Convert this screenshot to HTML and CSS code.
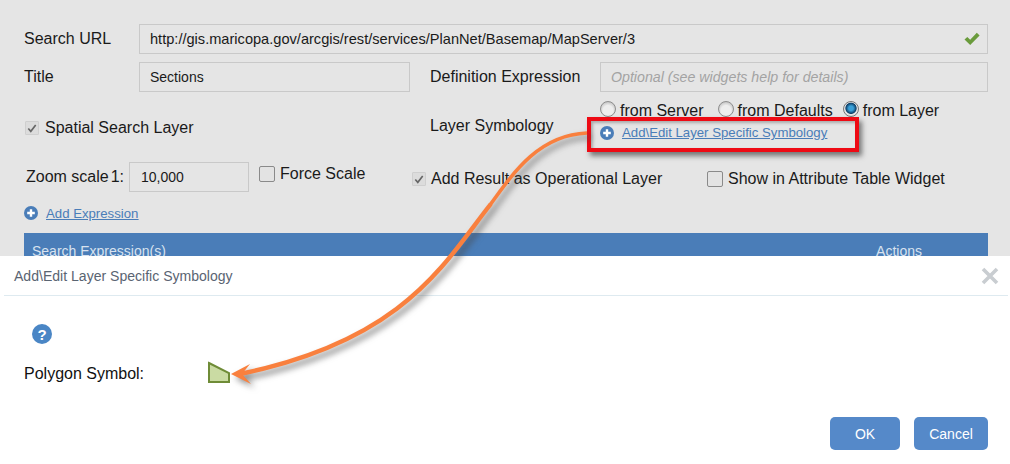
FILE: index.html
```html
<!DOCTYPE html>
<html lang="en">
<head>
<meta charset="utf-8">
<title>Layer Specific Symbology</title>
<link rel="stylesheet" href="styles.css">
</head>
<body>
<main class="page">
  <section class="settings">
    <div class="row row-url">
      <label class="label label-first">Search URL</label>
      <div class="field field-url"><span>http://gis.maricopa.gov/arcgis/rest/services/PlanNet/Basemap/MapServer/3</span>
        <svg class="ok-check" width="16" height="14" viewBox="0 0 16 14"><path d="M0.5 7.5 L3.3 5 L6.2 7.8 L12.8 0.8 L15.6 3.4 L6.2 13 Z" fill="#6a9b3c"/></svg>
      </div>
    </div>
    <div class="row row-title">
      <label class="label label-first">Title</label>
      <div class="field field-title">Sections</div>
      <label class="label label-def">Definition Expression</label>
      <div class="field field-def">Optional (see widgets help for details)</div>
    </div>
    <div class="row row-symbology">
      <div class="check-wrap check-spatial">
        <span class="check check-on"><svg width="13" height="13" viewBox="0 0 13 13"><path d="M2.5 6.5 L5.2 9.6 L10.5 2.8" fill="none" stroke="#666" stroke-width="1.8"/></svg></span>
        <span>Spatial Search Layer</span>
      </div>
      <div class="label label-symbology">Layer Symbology</div>
      <div class="symbology-options">
        <div class="radios">
          <span class="radio"></span><span class="radio-text">from Server</span>
          <span class="radio"></span><span class="radio-text">from Defaults</span>
          <span class="radio radio-on"></span><span class="radio-text">from Layer</span>
        </div>
        <a class="link link-symbology" href="#">
          <svg class="plus" width="14" height="14" viewBox="0 0 14 14"><circle cx="7" cy="7" r="7" fill="#4a7db8"/><path d="M3.2 7H10.8M7 3.2V10.8" stroke="#fff" stroke-width="2.4"/></svg>
          <span>Add\Edit Layer Specific Symbology</span>
        </a>
      </div>
    </div>
    <div class="row row-zoom">
      <span class="label zoom-label">Zoom scale<span class="zoom-one">1:</span></span>
      <div class="field field-zoom">10,000</div>
      <div class="check-wrap check-force"><span class="check"></span><span>Force Scale</span></div>
      <div class="check-wrap check-result">
        <span class="check check-on"><svg width="13" height="13" viewBox="0 0 13 13"><path d="M2.5 6.5 L5.2 9.6 L10.5 2.8" fill="none" stroke="#666" stroke-width="1.8"/></svg></span>
        <span>Add Result as Operational Layer</span>
      </div>
      <div class="check-wrap check-table"><span class="check"></span><span>Show in Attribute Table Widget</span></div>
    </div>
    <a class="link link-expression" href="#">
      <svg class="plus" width="14" height="14" viewBox="0 0 14 14"><circle cx="7" cy="7" r="7" fill="#4a7db8"/><path d="M3.2 7H10.8M7 3.2V10.8" stroke="#fff" stroke-width="2.4"/></svg>
      <span>Add Expression</span>
    </a>
    <div class="table-head"><span>Search Expression(s)</span><span class="actions">Actions</span></div>
  </section>
  <section class="dialog">
    <header class="dialog-head">
      <h1>Add\Edit Layer Specific Symbology</h1>
      <svg class="close" width="18" height="18" viewBox="0 0 18 18"><path d="M2 2L16 16M16 2L2 16" stroke="#c9cdd1" stroke-width="3.6"/></svg>
    </header>
    <div class="dialog-body">
      <span class="help">?</span>
      <div class="symbol-row">
        <span class="symbol-label">Polygon Symbol:</span>
        <svg width="22" height="22" viewBox="0 0 22 22"><path d="M1 2 L21 12 V21 H1 Z" fill="#cadba3" stroke="#6f8c37" stroke-width="2"/></svg>
      </div>
    </div>
    <footer class="dialog-foot">
      <button class="btn btn-ok">OK</button>
      <button class="btn btn-cancel">Cancel</button>
    </footer>
  </section>
  <div class="red-box"></div>
  <svg class="arrow" width="1010" height="464" viewBox="0 0 1010 464">
    <path d="M587 133 C540 135 515 170 490 205" fill="none" stroke="#f9803e" stroke-width="3.6"/>
    <path d="M490 205 C445 262 405 340 240 374" fill="none" stroke="#f9803e" stroke-width="4.4" stroke-linejoin="round" stroke-linecap="round"/>
    <path d="M231 374 L250 364 L242 374 L251 384 Z" fill="#f9803e"/>
  </svg>
</main>
</body>
</html>
```
FILE: styles.css
```css
* { box-sizing: border-box; }
html, body { margin: 0; padding: 0; }
body { width: 1010px; height: 464px; overflow: hidden; background: #fff; font-family: "Liberation Sans", Arial, sans-serif; color: #1a1a1a; }
.page { position: relative; width: 1010px; height: 464px; overflow: hidden; }

.settings { height: 256px; background: #e5e5e5; padding: 24px 22px 0 24px; overflow: hidden; font-size: 16px; }
.row { display: flex; align-items: center; }
.label { font-size: 16px; }
.label-first { width: 115px; flex: none; }
.field { height: 30px; border: 1px solid #c9c9c9; display: flex; align-items: center; padding-left: 10px; font-size: 14px; flex: none; }
.row-url { height: 30px; margin-bottom: 8px; }
.field-url { width: 849px; justify-content: space-between; padding-right: 7px; font-size: 14.6px; }
.row-title { height: 30px; margin-bottom: 8px; }
.field-title { width: 271px; }
.label-def { margin-left: 20px; width: 170px; flex: none; }
.field-def { width: 388px; font-style: italic; color: #a3a3a3; font-size: 14.2px; }

.row-symbology { height: 54px; margin-bottom: 8px; position: relative; }
.check-wrap { display: flex; align-items: center; }
.check { width: 14px; height: 14px; border: 1px solid #b5b5b5; background: #e3e3e3; border-radius: 1px; display: inline-flex; flex: none; }
.check-on { background: #dcdcdc; border-color: #cfcfcf; }
.check-spatial { width: 406px; flex: none; gap: 6px; padding-left: 1px; margin-top: 1px; }
.label-symbology { width: 170px; flex: none; margin-top: -2px; }
.symbology-options { display: flex; flex-direction: column; margin-top: -13px; }
.radios { display: flex; align-items: center; height: 20px; font-size: 16px; }
.radio { width: 16px; height: 16px; border-radius: 50%; background: radial-gradient(circle at 50% 60%, #eee 0 45%, #c8c8c8 75%); border: 1px solid #8e8e8e; flex: none; margin-right: 4px; margin-top: -4px; }
.radio-on { margin-left: -4px; margin-right: 4px; background: radial-gradient(circle at 50% 45%, #39a0d8 0 22%, #0c3d66 50%, #e8e8e8 58%, #d0d0d0 100%); border-color: #777; }
.radio-text { margin-right: 14px; }
.link { display: inline-flex; align-items: center; color: #4a7db8; font-size: 13.2px; gap: 8px; }
.link span { text-decoration: underline; }
.link-symbology { margin-top: 4px; }

.row-zoom { height: 30px; position: relative; }
.zoom-label { width: 105px; padding-left: 2px; flex: none; }
.zoom-one { margin-left: 2px; }
.field-zoom { width: 120px; padding-left: 11px; }
.check-force { gap: 5px; margin-left: 10px; width: 152px; flex: none; margin-top: -6px; }
.check-force .check, .check-table .check { width: 16px; height: 16px; border-color: #8a8a8a; border-radius: 2px; }
.check-result { gap: 5px; width: 296px; flex: none; padding-left: 1px; margin-top: 3px; }
.check-table { gap: 5px; flex: none; margin-top: 3px; }

.link-expression { display: flex; margin-top: 14px; height: 14px; }
.table-head { margin-top: 13px; height: 40px; background: #4a7db8; color: #d8e2ef; font-size: 14px; display: flex; justify-content: space-between; padding: 10px 66px 0 8px; }

.dialog { height: 208px; background: #fff; display: flex; flex-direction: column; }
.dialog-head { height: 40px; border-bottom: 1px solid #deeaf0; margin-left: 4px; margin-right: 2px; display: flex; align-items: center; justify-content: space-between; padding-left: 10px; padding-right: 9px; }
.dialog-head h1 { margin: 0; font-size: 14.05px; font-weight: 400; color: #5a6472; }
.dialog-body { flex: 1; padding: 28px 0 0 24px; }
.help { display: flex; width: 20px; height: 20px; border-radius: 50%; background: #4a86c5; color: #fff; font-weight: 700; font-size: 15px; align-items: center; justify-content: center; margin-left: 8px; }
.symbol-row { display: flex; align-items: flex-end; margin-top: 17px; height: 22px; }
.symbol-label { width: 184px; font-size: 16px; color: #111; }
.dialog-foot { display: flex; justify-content: flex-end; gap: 14px; padding: 0 22px 14px 0; }
.btn { height: 33px; border: 0; border-radius: 5px; background: #5589c9; color: #fff; font: 14px "Liberation Sans", Arial, sans-serif; padding: 0; }
.btn-ok { width: 70px; }
.btn-cancel { width: 74px; }

.red-box { position: absolute; left: 587px; top: 117px; width: 272px; height: 35px; border: 4px solid #ee0a14; box-shadow: 3px 4px 5px rgba(60,60,60,.65), inset 2px 2px 3px rgba(60,60,60,.35); }
.arrow { position: absolute; left: 0; top: 0; pointer-events: none; filter: drop-shadow(4px 4px 3px rgba(70,70,70,.65)); }
```
